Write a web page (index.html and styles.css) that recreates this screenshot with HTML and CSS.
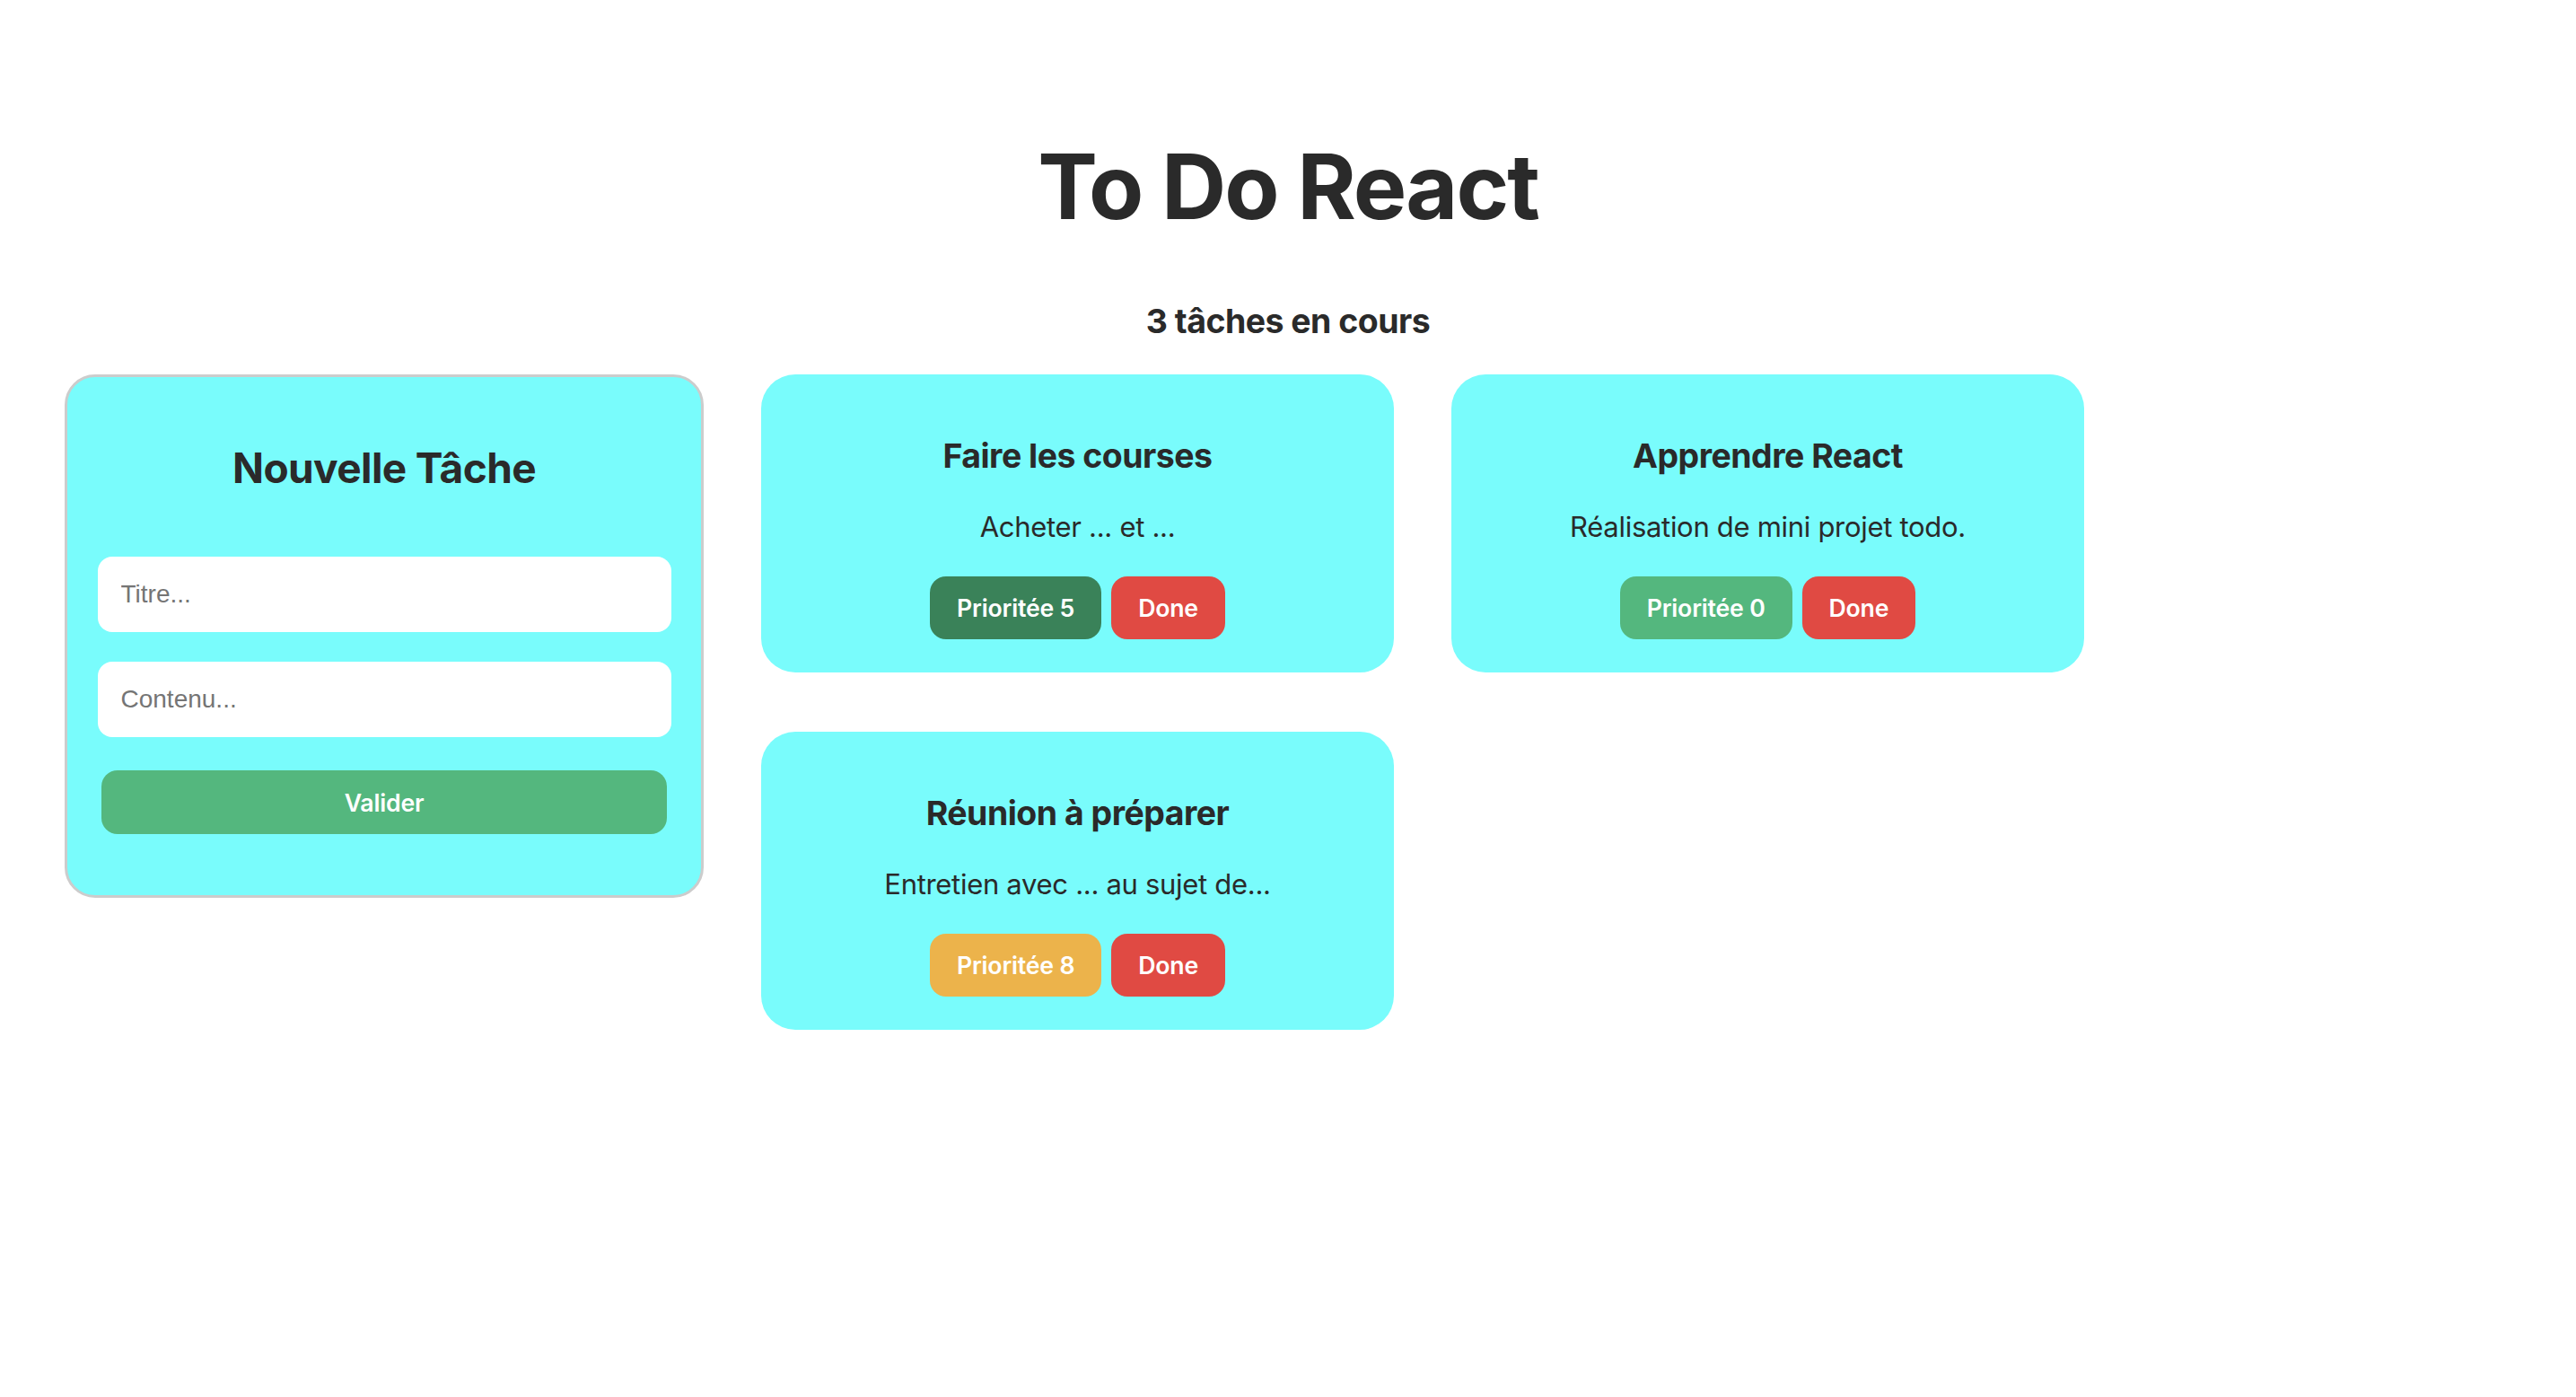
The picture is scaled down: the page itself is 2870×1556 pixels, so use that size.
FILE: index.html
```html
<!DOCTYPE html>
<html lang="fr">
<head>
<meta charset="utf-8">
<title>To Do React</title>
<link rel="stylesheet" href="styles.css">
</head>
<body>
<div class="app">
  <h1 class="app-title">To Do React</h1>
  <h3 class="count">3 tâches en cours</h3>
  <div class="board">
    <form class="new-task">
      <h2 class="new-task-title">Nouvelle Tâche</h2>
      <input class="field" type="text" placeholder="Titre...">
      <input class="field field-second" type="text" placeholder="Contenu...">
      <button class="submit" type="button">Valider</button>
    </form>
    <div class="tasks">
      <div class="task">
        <h3 class="task-title">Faire les courses</h3>
        <p class="task-text">Acheter ... et ...</p>
        <div class="task-actions">
          <button class="btn prio-mid" type="button">Prioritée 5</button>
          <button class="btn done" type="button">Done</button>
        </div>
      </div>
      <div class="task">
        <h3 class="task-title">Apprendre React</h3>
        <p class="task-text">Réalisation de mini projet todo.</p>
        <div class="task-actions">
          <button class="btn prio-low" type="button">Prioritée 0</button>
          <button class="btn done" type="button">Done</button>
        </div>
      </div>
      <div class="task">
        <h3 class="task-title">Réunion à préparer</h3>
        <p class="task-text">Entretien avec ... au sujet de...</p>
        <div class="task-actions">
          <button class="btn prio-high" type="button">Prioritée 8</button>
          <button class="btn done" type="button">Done</button>
        </div>
      </div>
    </div>
  </div>
</div>
</body>
</html>
```

FILE: styles.css
```css
* {
  box-sizing: border-box;
}

html, body {
  margin: 0;
  padding: 0;
  background: #ffffff;
}

body {
  font-family: Inter, "Noto Sans", sans-serif;
  color: #2a2a2a;
}

.app {
  padding: 147px 72px 40px;
}

.app-title {
  margin: 0 0 67px;
  font-size: 100px;
  font-weight: 700;
  line-height: 121px;
  letter-spacing: -2px;
  text-align: center;
}

.count {
  margin: 0 0 37px;
  font-size: 37.44px;
  font-weight: 700;
  line-height: 45.3px;
  letter-spacing: -0.5px;
  text-align: center;
}

.board {
  display: flex;
  align-items: flex-start;
  gap: 64px;
}

.new-task {
  flex: 0 0 712px;
  width: 712px;
  display: flex;
  flex-direction: column;
  align-items: center;
  padding: 72px 0 68px;
  background: #79fcfc;
  border: 3px solid #cccccc;
  border-radius: 34px;
}

.new-task-title {
  margin: 0 0 70px;
  font-size: 46px;
  font-weight: 700;
  line-height: 58px;
  letter-spacing: -0.6px;
}

.field {
  display: block;
  width: 639px;
  height: 84px;
  margin: 0;
  padding: 0 26px;
  border: none;
  border-radius: 16px;
  background: #ffffff;
  font-family: "Liberation Sans", Arial, sans-serif;
  font-size: 28px;
  color: #2a2a2a;
  outline: none;
}

.field::placeholder {
  color: #757575;
}

.field-second {
  margin-top: 33px;
}

.submit {
  display: block;
  width: 630px;
  height: 71px;
  margin-top: 37px;
  border: none;
  border-radius: 18px;
  background: #54b77e;
  color: #ffffff;
  font-family: Inter, "Noto Sans", sans-serif;
  font-size: 26.67px;
  font-weight: 600;
  letter-spacing: -0.2px;
}

.tasks {
  flex: 1 1 auto;
  display: flex;
  flex-wrap: wrap;
  align-content: flex-start;
  gap: 66px 64px;
}

.task {
  width: 705px;
  display: flex;
  flex-direction: column;
  align-items: center;
  padding: 68px 30px 37px;
  background: #79fcfc;
  border-radius: 38px;
}

.task-title {
  margin: 0;
  font-size: 37.44px;
  font-weight: 700;
  line-height: 45.3px;
  letter-spacing: -0.5px;
  text-align: center;
}

.task-text {
  margin: 37px 0 0;
  font-size: 31px;
  font-weight: 400;
  line-height: 38.7px;
  letter-spacing: -0.3px;
  text-align: center;
}

.task-actions {
  display: flex;
  gap: 11px;
  margin-top: 36px;
}

.btn {
  height: 70px;
  padding: 0 30px;
  border: none;
  border-radius: 18px;
  color: #ffffff;
  font-family: Inter, "Noto Sans", sans-serif;
  font-size: 26.67px;
  font-weight: 600;
  letter-spacing: -0.2px;
}

.prio-mid {
  background: #3a8259;
}

.prio-low {
  background: #54b77e;
}

.prio-high {
  background: #ecb34b;
}

.done {
  background: #e04a43;
}
```
